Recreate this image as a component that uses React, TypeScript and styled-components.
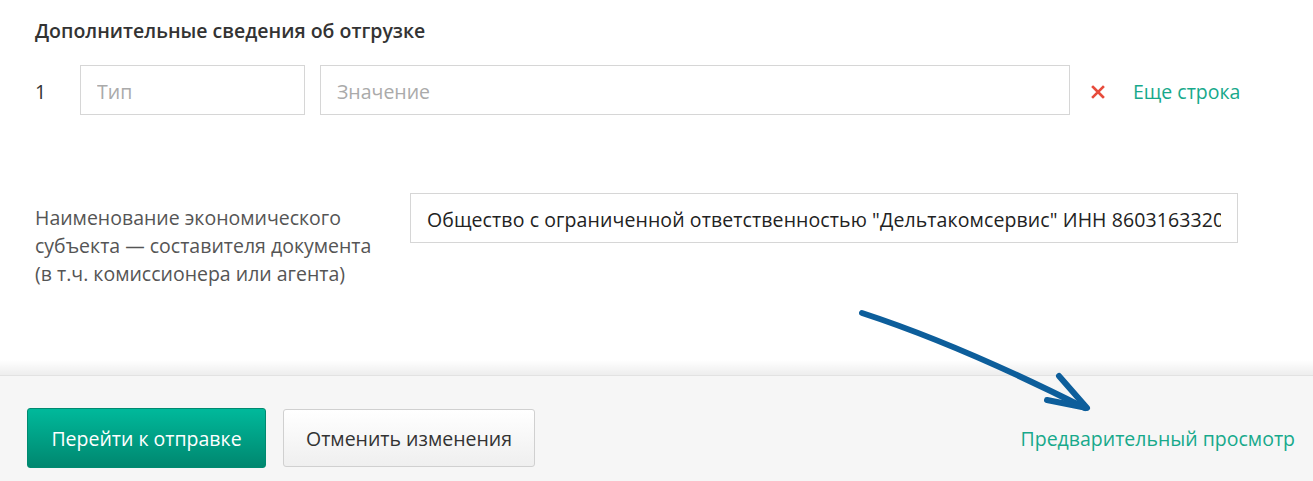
import React from "react";
import styled, { createGlobalStyle } from "styled-components";

const Global = createGlobalStyle`
  html, body { margin: 0; padding: 0; background: #fff; }
  body { font-family: "Open Sans", "Noto Sans", sans-serif; color: #333; }
  * { box-sizing: border-box; }
`;

const Page = styled.div`
  position: relative;
  width: 1313px;
  height: 481px;
  overflow: hidden;
  display: flex;
  flex-direction: column;
`;

const Content = styled.div`
  flex: 1;
  padding: 17px 0 0 35px;
  display: flex;
  flex-direction: column;
`;

const Title = styled.h2`
  margin: 0;
  font-size: 19.5px;
  line-height: 28px;
  font-weight: 600;
  color: #333;
`;

const Row = styled.div`
  display: flex;
  align-items: center;
  margin-top: 20px;
  height: 50px;
`;

const Num = styled.span`
  width: 45px;
  padding-top: 3px;
  font-size: 19.5px;
  color: #333;
`;

const Input = styled.input<{ $w: number }>`
  width: ${(p) => p.$w}px;
  height: 50px;
  border: 1px solid #d6d6d6;
  padding: 2px 16px 0;
  font-family: inherit;
  font-size: 19.5px;
  color: #222;
  outline: none;
  background: #fff;
  &::placeholder { color: #aaa; }
`;

const Gap = styled.div<{ $w: number }>`
  width: ${(p) => p.$w}px;
  flex: none;
`;

const RemoveBtn = styled.button`
  border: 0;
  background: none;
  padding: 0;
  width: 16px;
  height: 16px;
  margin-top: 3px;
  display: flex;
  align-items: center;
  justify-content: center;
  cursor: pointer;
`;

const Link = styled.a`
  color: #17a98b;
  font-size: 19.5px;
  line-height: 27px;
  text-decoration: none;
  cursor: pointer;
`;

const RowLink = styled(Link)`
  margin-top: 3px;
`;

const FieldRow = styled.div`
  display: flex;
  align-items: flex-start;
  margin-top: 78px;
`;

const Label = styled.div`
  width: 345px;
  margin-right: 30px;
  font-size: 19.5px;
  line-height: 28px;
  color: #555;
  margin-top: 11px;
`;

const WideInput = styled(Input)`
  color: #222;
  letter-spacing: 0.1px;
`;

const Footer = styled.div`
  position: relative;
  height: 106px;
  background: #f6f6f6;
  border-top: 1px solid #e2e2e2;
  display: flex;
  align-items: flex-start;
  padding: 32px 18px 0 27px;
  &::before {
    content: "";
    position: absolute;
    left: 0;
    right: 0;
    top: -16px;
    height: 15px;
    background: linear-gradient(to bottom, rgba(0,0,0,0), rgba(0,0,0,0.07));
  }
`;

const Primary = styled.button`
  height: 60px;
  width: 239px;
  border: 1px solid #008a70;
  border-radius: 3px;
  background: linear-gradient(to bottom, #00b99b, #00876f);
  color: #fff;
  font-family: inherit;
  font-size: 19.5px;
  cursor: pointer;
`;

const Secondary = styled.button`
  height: 58px;
  width: 252px;
  margin: 1px 0 0 17px;
  border: 1px solid #d0d0d0;
  border-radius: 3px;
  background: linear-gradient(to bottom, #ffffff, #efefef);
  color: #333;
  font-family: inherit;
  font-size: 19.5px;
  cursor: pointer;
`;

const Spacer = styled.div`
  flex: 1;
`;

const FooterLink = styled(Link)`
  margin-top: 17px;
`;

const Arrow = styled.svg`
  position: absolute;
  left: 0;
  top: 0;
  pointer-events: none;
`;

export default function App() {
  return (
    <Page>
      <Global />
      <Content>
        <Title>Дополнительные сведения об отгрузке</Title>
        <Row>
          <Num>1</Num>
          <Input $w={225} placeholder="Тип" />
          <Gap $w={15} />
          <Input $w={750} placeholder="Значение" />
          <Gap $w={20} />
          <RemoveBtn aria-label="Удалить">
            <svg width="14" height="14" viewBox="0 0 14 14">
              <path d="M2 2L12 12M12 2L2 12" stroke="#e74c3c" strokeWidth="2.6" strokeLinecap="square" />
            </svg>
          </RemoveBtn>
          <Gap $w={27} />
          <RowLink>Еще строка</RowLink>
        </Row>
        <FieldRow>
          <Label>
            Наименование экономического субъекта — составителя документа (в т.ч. комиссионера или агента)
          </Label>
          <WideInput
            $w={828}
            defaultValue={'Общество с ограниченной ответственностью "Дельтакомсервис" ИНН 8603163320 КПП 860301001'}
          />
        </FieldRow>
      </Content>
      <Footer>
        <Primary>Перейти к отправке</Primary>
        <Secondary>Отменить изменения</Secondary>
        <Spacer />
        <FooterLink>Предварительный просмотр</FooterLink>
      </Footer>
      <Arrow width="1313" height="481" viewBox="0 0 1313 481">
        <g fill="none" stroke="#0d5e9b" strokeWidth="6" strokeLinecap="round" strokeLinejoin="round">
          <path d="M862 313 Q960 345 1085 408" />
          <path d="M1059 376 L1087 408 L1047 400" />
        </g>
      </Arrow>
    </Page>
  );
}
